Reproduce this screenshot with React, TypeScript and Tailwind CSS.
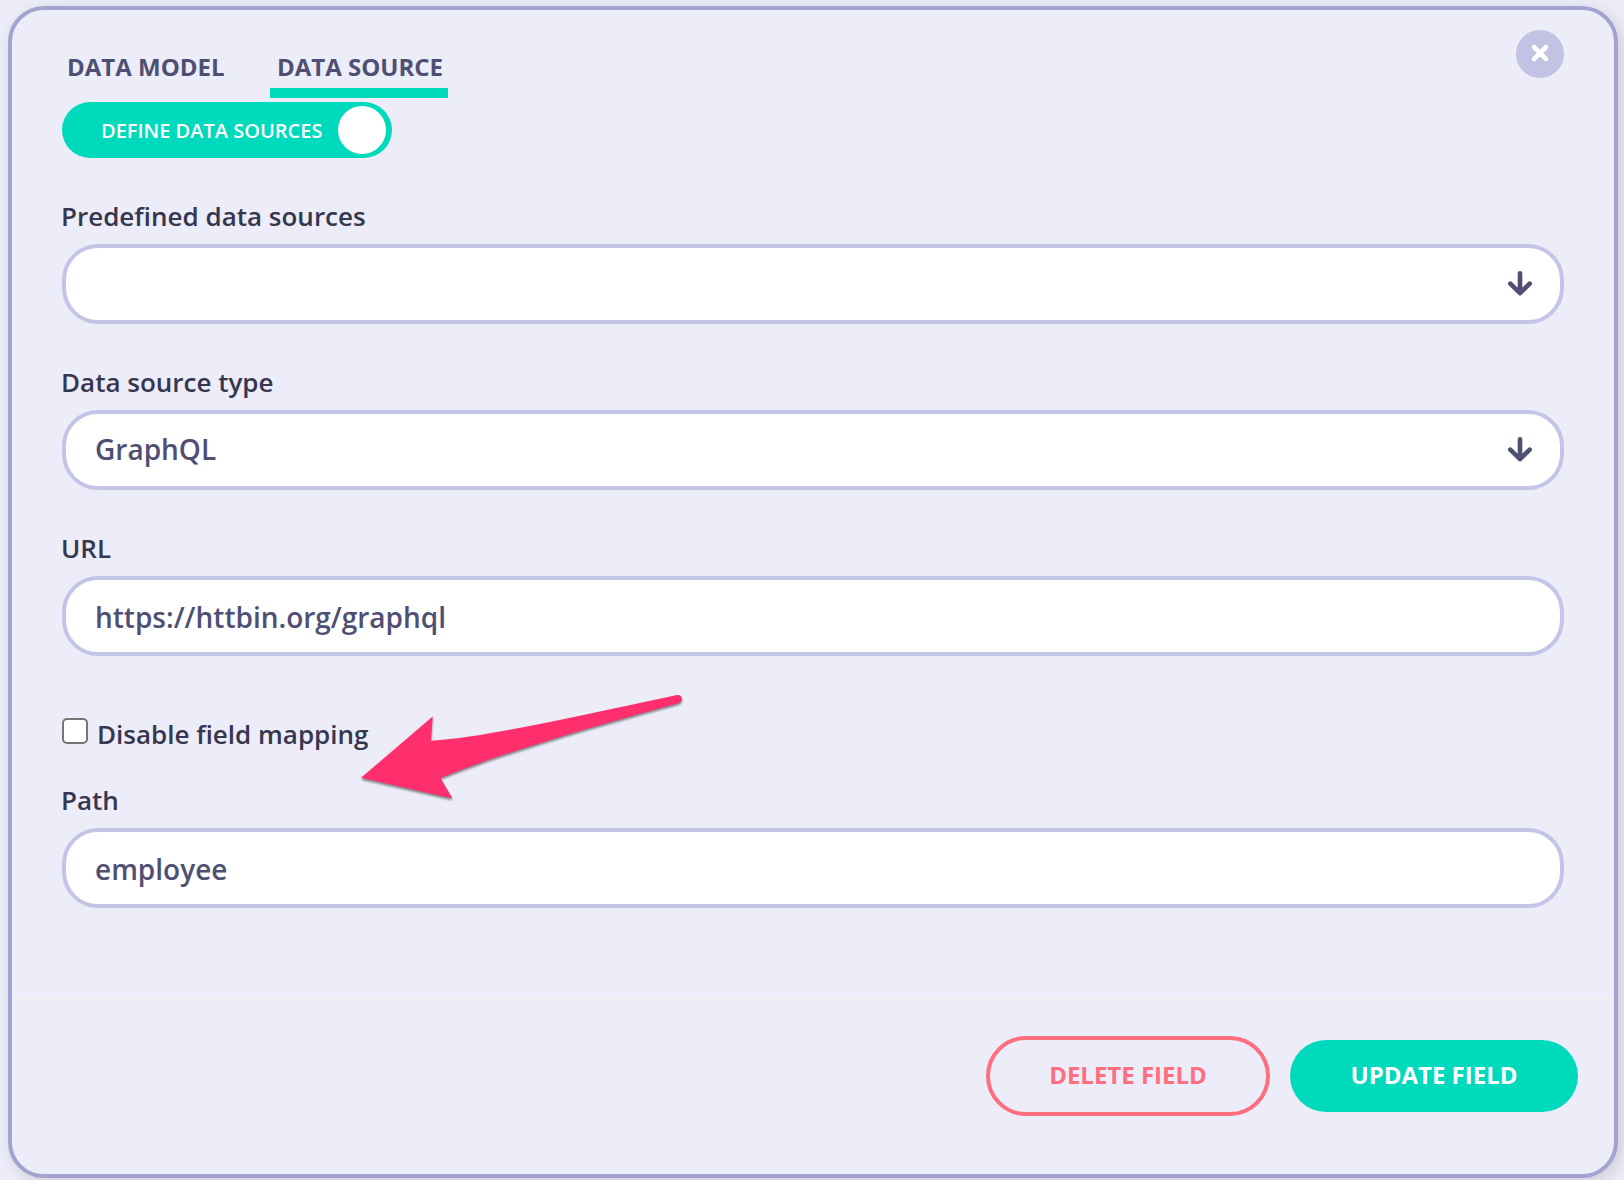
import React, { useState } from "react";

function DownArrow() {
  return (
    <svg width="28" height="28" viewBox="0 0 28 28" fill="none" stroke="#4f4f74" strokeWidth="4.6" strokeLinecap="round" strokeLinejoin="round">
      <path d="M14 3.2V22.8M4.3 13.7L14 23.2L23.7 13.7" />
    </svg>
  );
}

function Field({ label, value, select = false, className = "" }: { label: string; value: string; select?: boolean; className?: string }) {
  return (
    <div className={className}>
      <div className="mb-2.5 -ml-px text-[26px] leading-9 text-[#36364f]">{label}</div>
      <div className="flex h-20 items-center justify-between rounded-[36px] border-4 border-[#c4c4e6] bg-white pr-[26px] pl-[29px] text-[28px] text-[#4f4f74]">
        <span className={select ? "pb-[2px] leading-9" : "pt-[2px] leading-9"}>{value}</span>
        {select && <DownArrow />}
      </div>
    </div>
  );
}

function Pointer() {
  return (
    <svg className="absolute top-[670px] left-[338px] drop-shadow-[0_2px_1px_rgba(0,0,0,0.45)]" width="350" height="130" viewBox="0 0 350 130">
      <path
        fill="#ff2f6d"
        d="M11 97.8L82.7 36.6L81 60.8C140 56.5 230 35.5 327 15C333 14.3 334 21.8 328 23.2C240 47 150 73.5 90.5 98L102.5 118.5Z"
      />
    </svg>
  );
}

export default function App() {
  const [checked, setChecked] = useState(false);
  return (
    <div className="h-[1180px] w-[1624px] overflow-hidden bg-[#ecedf8] pt-1.5 pl-2 font-['Open_Sans',sans-serif] font-semibold">
      <div className="relative flex h-[1172px] w-[1610px] flex-col rounded-[36px] border-4 border-[#a4a3cf] bg-[#ecedf8] shadow-[4px_4px_16px_rgba(0,0,0,0.14)]">
        <div className="flex h-[990px] flex-col border-b-2 border-[#f0f0f0] pr-[50px] pl-[50px]">
          <div className="flex h-[88px] items-start justify-between">
            <div className="flex pt-[38px] text-2xl font-bold text-[#4f4f74]">
              <div className="h-[50px] w-[170px] pt-px pl-[5px] leading-9">DATA MODEL</div>
              <div className="ml-[38px] h-[50px] w-[178px] border-b-10 border-[#00dabc] pt-px pl-[7px] leading-9">DATA SOURCE</div>
            </div>
            <button className="mt-5 flex size-12 items-center justify-center rounded-full bg-[#c4c2e4] pb-[2px]">
              <svg width="20" height="20" viewBox="0 0 20 20" stroke="white" strokeWidth="4.8" strokeLinecap="round">
                <path d="M4.1 4.1L15.9 15.9M15.9 4.1L4.1 15.9" />
              </svg>
            </button>
          </div>
          <div className="mt-1 flex h-14 w-[330px] shrink-0 items-center justify-between rounded-full bg-[#00dabc] pr-1.5 pl-[39px] text-xl text-white">
            <span className="pt-[2px] whitespace-nowrap">DEFINE DATA SOURCES</span>
            <span className="size-12 shrink-0 rounded-full bg-white" />
          </div>
          <Field className="mt-10" label="Predefined data sources" value="" select />
          <Field className="mt-10" label="Data source type" value="GraphQL" select />
          <Field className="mt-10" label="URL" value="https://httbin.org/graphql" />
          <label className="mt-[60px] flex h-9 items-center text-[26px] leading-9 text-[#36364f]">
            <input
              type="checkbox"
              checked={checked}
              onChange={() => setChecked(!checked)}
              className="relative -top-[3px] mr-[9px] size-[26px] appearance-none rounded-[5px] border-2 border-[#767676] bg-white checked:bg-[#00dabc]"
            />
            Disable field mapping
          </label>
          <Field className="mt-[30px]" label="Path" value="employee" />
        </div>
        <div className="flex items-center justify-end gap-5 pt-9 pr-9 text-2xl font-bold">
          <button className="h-20 w-[284px] rounded-full border-4 border-[#ff6e7f] pb-[3px] text-[#ff6e7f]">DELETE FIELD</button>
          <button className="h-[72px] w-[288px] rounded-full bg-[#00dabc] pb-[3px] text-white">UPDATE FIELD</button>
        </div>
        <Pointer />
      </div>
    </div>
  );
}
